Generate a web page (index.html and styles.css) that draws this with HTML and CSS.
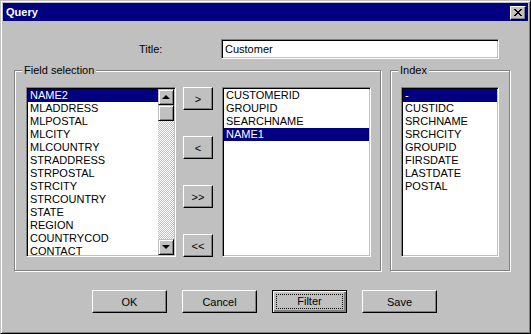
FILE: index.html
```html
<!DOCTYPE html>
<html lang="en">
<head>
    <meta charset="UTF-8">
    <title>Query</title>
    <link rel="stylesheet" href="styles.css">
</head>
<body>

    <div class="window">
        <!-- Title bar -->
        <div class="titlebar">
            <span class="caption">Query</span>
            <button class="close-btn">
                <svg width="8" height="7" viewBox="0 0 8 7">
                    <rect x="0" y="0" width="2" height="1"/><rect x="6" y="0" width="2" height="1"/>
                    <rect x="1" y="1" width="2" height="1"/><rect x="5" y="1" width="2" height="1"/>
                    <rect x="2" y="2" width="4" height="1"/>
                    <rect x="3" y="3" width="2" height="1"/>
                    <rect x="2" y="4" width="4" height="1"/>
                    <rect x="1" y="5" width="2" height="1"/><rect x="5" y="5" width="2" height="1"/>
                    <rect x="0" y="6" width="2" height="1"/><rect x="6" y="6" width="2" height="1"/>
                </svg>
            </button>
        </div>

        <div class="dialog">
            <div class="title-row">
                <span class="title-label">Title:</span>
                <div class="field">Customer</div>
            </div>

            <div class="groups">
                <!-- Field selection -->
                <div class="group group-fields">
                    <span class="group-label">Field selection</span>

                    <div class="listbox listbox-avail">
                        <ul class="items">
                            <li class="selected">NAME2</li>
                            <li>MLADDRESS</li>
                            <li>MLPOSTAL</li>
                            <li>MLCITY</li>
                            <li>MLCOUNTRY</li>
                            <li>STRADDRESS</li>
                            <li>STRPOSTAL</li>
                            <li>STRCITY</li>
                            <li>STRCOUNTRY</li>
                            <li>STATE</li>
                            <li>REGION</li>
                            <li>COUNTRYCOD</li>
                            <li>CONTACT</li>
                        </ul>
                        <div class="scrollbar">
                            <div class="sb-btn"><span class="arrow-up"></span></div>
                            <div class="sb-thumb"></div>
                            <div class="sb-track"></div>
                            <div class="sb-btn"><span class="arrow-down"></span></div>
                        </div>
                    </div>

                    <div class="move-buttons">
                        <button class="btn btn-move">&gt;</button>
                        <button class="btn btn-move">&lt;</button>
                        <button class="btn btn-move">&gt;&gt;</button>
                        <button class="btn btn-move">&lt;&lt;</button>
                    </div>

                    <div class="listbox listbox-chosen">
                        <ul class="items">
                            <li>CUSTOMERID</li>
                            <li>GROUPID</li>
                            <li>SEARCHNAME</li>
                            <li class="selected">NAME1</li>
                        </ul>
                    </div>
                </div>

                <!-- Index -->
                <div class="group group-index">
                    <span class="group-label">Index</span>
                    <div class="listbox listbox-index">
                        <ul class="items">
                            <li class="selected">-</li>
                            <li>CUSTIDC</li>
                            <li>SRCHNAME</li>
                            <li>SRCHCITY</li>
                            <li>GROUPID</li>
                            <li>FIRSDATE</li>
                            <li>LASTDATE</li>
                            <li>POSTAL</li>
                        </ul>
                    </div>
                </div>
            </div>

            <div class="actions">
                <button class="btn btn-action">OK</button>
                <button class="btn btn-action">Cancel</button>
                <button class="btn btn-action btn-default"><span class="focus">Filter</span></button>
                <button class="btn btn-action">Save</button>
            </div>
        </div>
    </div>

</body>
</html>
```

FILE: styles.css
```css
* {
    box-sizing: border-box;
}

body {
    margin: 0;
    font-family: 'Liberation Sans', Arial, sans-serif;
    font-size: 11px;
    color: #000;
    background: #c0c0c0;
}

.window {
    width: 531px;
    height: 334px;
    background: #c0c0c0;
    border: 1px solid;
    border-color: #c0c0c0 #000 #000 #c0c0c0;
    box-shadow: inset 1px 1px #fff, inset -1px -1px #808080;
    padding: 2px;
    display: flex;
    flex-direction: column;
}

/* title bar */
.titlebar {
    height: 18px;
    background: #000080;
    color: #fff;
    display: flex;
    align-items: center;
    justify-content: space-between;
    padding: 0 2px 0 3px;
}
.caption {
    font-weight: bold;
    font-size: 11px;
    line-height: 18px;
}
.close-btn {
    width: 16px;
    height: 14px;
    padding: 0;
    margin-top: 1px;
    background: #c0c0c0;
    border: 1px solid;
    border-color: #fff #000 #000 #fff;
    box-shadow: inset -1px -1px #808080;
    display: flex;
    align-items: center;
    justify-content: center;
}
.close-btn svg {
    fill: #000;
    display: block;
}

/* dialog body */
.dialog {
    flex: 1;
    display: flex;
    flex-direction: column;
}

.title-row {
    display: flex;
    align-items: center;
    margin-top: 18px;
    height: 20px;
}
.title-label {
    margin-left: 136px;
    width: 82px;
}
.field {
    width: 278px;
    height: 20px;
    background: #fff;
    border: 1px solid;
    border-color: #808080 #fff #fff #808080;
    box-shadow: inset 1px 1px #000, inset -1px -1px #c0c0c0;
    padding: 2px 3px;
    line-height: 15px;
}

.groups {
    display: flex;
    gap: 9px;
    margin-top: 11px;
    padding-left: 11px;
}
.group {
    position: relative;
    height: 201px;
    border: 1px solid #808080;
    box-shadow: inset 1px 1px #fff, 1px 1px #fff;
    display: flex;
    padding-top: 16px;
}
.group-label {
    position: absolute;
    top: -8px;
    left: 7px;
    padding: 0 2px;
    background: #c0c0c0;
    line-height: 14px;
}
.group-fields {
    width: 367px;
    padding-left: 11px;
}
.group-index {
    width: 120px;
    padding-left: 10px;
}

/* list boxes */
.listbox {
    height: 170px;
    background: #fff;
    border: 1px solid;
    border-color: #808080 #fff #fff #808080;
    box-shadow: inset 1px 1px #000, inset -1px -1px #c0c0c0;
    padding: 1px;
    display: flex;
    overflow: hidden;
}
.listbox-avail {
    width: 150px;
}
.listbox-chosen {
    width: 149px;
    margin-left: 9px;
}
.listbox-index {
    width: 98px;
}
.items {
    list-style: none;
    margin: 0;
    padding: 0;
    flex: 1;
    overflow: hidden;
}
.items li {
    height: 13px;
    line-height: 13px;
    padding-left: 2px;
    white-space: nowrap;
}
.items li.selected {
    background: #000080;
    color: #fff;
}

/* scrollbar */
.scrollbar {
    width: 16px;
    display: flex;
    flex-direction: column;
}
.sb-btn,
.sb-thumb {
    width: 16px;
    height: 16px;
    background: #c0c0c0;
    border: 1px solid;
    border-color: #c0c0c0 #000 #000 #c0c0c0;
    box-shadow: inset 1px 1px #fff, inset -1px -1px #808080;
    display: flex;
    align-items: center;
    justify-content: center;
}
.sb-track {
    flex: 1;
    background: repeating-conic-gradient(#fff 0 25%, #c0c0c0 0 50%) 0 0 / 2px 2px;
}
.arrow-up {
    border-left: 4px solid transparent;
    border-right: 4px solid transparent;
    border-bottom: 4px solid #000;
}
.arrow-down {
    border-left: 4px solid transparent;
    border-right: 4px solid transparent;
    border-top: 4px solid #000;
}

/* buttons */
.btn {
    font-family: inherit;
    font-size: 11px;
    color: #000;
    background: #c0c0c0;
    border: 1px solid;
    border-color: #fff #000 #000 #fff;
    box-shadow: inset -1px -1px #808080;
    padding: 0;
    height: 23px;
}
.move-buttons {
    display: flex;
    flex-direction: column;
    justify-content: space-between;
    height: 170px;
    margin-left: 7px;
}
.btn-move {
    width: 30px;
}

.actions {
    display: flex;
    gap: 15px;
    margin-top: 19px;
    padding-left: 89px;
}
.btn-action {
    width: 75px;
}
.btn-default {
    border: 1px solid #000;
    box-shadow: inset 1px 1px #fff, inset -1px -1px #808080, inset -2px -2px #808080;
    padding: 3px;
}
.focus {
    display: block;
    height: 15px;
    line-height: 13px;
    border: 1px dotted #000;
}
```
